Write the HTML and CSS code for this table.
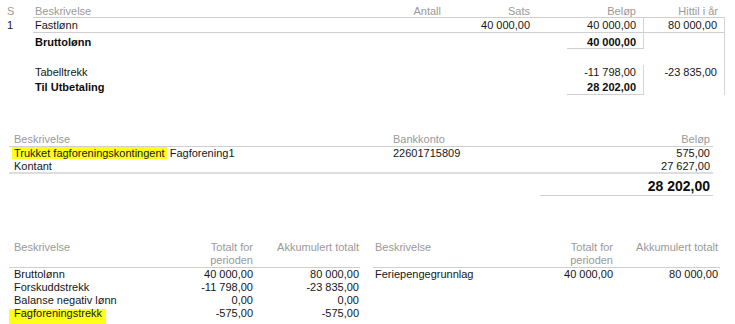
FILE: index.html
```html
<!DOCTYPE html>
<html lang="no">
<head>
<meta charset="utf-8">
<title>Lønnsslipp</title>
<link rel="stylesheet" href="styles.css">
</head>
<body>
<table class="lines">
  <colgroup>
    <col class="c-s"><col class="c-desc"><col class="c-ant"><col class="c-sats"><col class="c-gap"><col class="c-bel"><col class="c-hit">
  </colgroup>
  <tr class="hdr">
    <td class="s">S</td>
    <td class="b">Beskrivelse</td>
    <td class="b num">Antall</td>
    <td class="b num">Sats</td>
    <td class="b"></td>
    <td class="b num">Beløp</td>
    <td class="b num">Hittil i år</td>
  </tr>
  <tr class="r1">
    <td class="s">1</td>
    <td class="b">Fastlønn</td>
    <td class="b"></td>
    <td class="b num">40 000,00</td>
    <td class="b"></td>
    <td class="b num">40 000,00</td>
    <td class="b num vl vr">80 000,00</td>
  </tr>
  <tr class="r2">
    <td></td>
    <td class="bold">Bruttolønn</td>
    <td></td><td></td><td></td>
    <td class="num bold b">40 000,00</td>
    <td class="vl vr"></td>
  </tr>
  <tr class="r3">
    <td></td><td></td><td></td><td></td><td></td><td></td>
    <td class="vr"></td>
  </tr>
  <tr class="r4">
    <td></td>
    <td>Tabelltrekk</td>
    <td></td><td></td><td></td>
    <td class="num">-11 798,00</td>
    <td class="num vl vr">-23 835,00</td>
  </tr>
  <tr class="r5">
    <td></td>
    <td class="bold">Til Utbetaling</td>
    <td></td><td></td><td></td>
    <td class="num bold b">28 202,00</td>
    <td class="vl vr"></td>
  </tr>
</table>

<table class="pay">
  <colgroup><col class="p-desc"><col class="p-bank"><col class="p-bel"></colgroup>
  <tr class="phdr">
    <td class="b">Beskrivelse</td>
    <td class="b">Bankkonto</td>
    <td class="b num">Beløp</td>
  </tr>
  <tr class="pr1">
    <td><span class="hl">Trukket fagforeningskontingent</span> Fagforening1</td>
    <td>22601715809</td>
    <td class="num">575,00</td>
  </tr>
  <tr class="pr2">
    <td class="b2">Kontant</td>
    <td class="b2"></td>
    <td class="b2 num">27 627,00</td>
  </tr>
</table>
<div class="total-row">
  <div class="total">28 202,00</div>
</div>

<div class="sums">
  <table class="sum left">
    <colgroup><col class="s-desc"><col class="s-per"><col class="s-acc"></colgroup>
    <tr class="shdr">
      <td class="b">Beskrivelse</td>
      <td class="b num">Totalt for<br>perioden</td>
      <td class="b num">Akkumulert totalt</td>
    </tr>
    <tr><td>Bruttolønn</td><td class="num">40 000,00</td><td class="num">80 000,00</td></tr>
    <tr><td>Forskuddstrekk</td><td class="num">-11 798,00</td><td class="num">-23 835,00</td></tr>
    <tr><td>Balanse negativ lønn</td><td class="num">0,00</td><td class="num">0,00</td></tr>
    <tr><td><span class="hl2">Fagforeningstrekk</span></td><td class="num">-575,00</td><td class="num">-575,00</td></tr>
  </table>
  <table class="sum right">
    <colgroup><col class="s-desc2"><col class="s-per"><col class="s-acc"></colgroup>
    <tr class="shdr">
      <td class="b">Beskrivelse</td>
      <td class="b num">Totalt for<br>perioden</td>
      <td class="b num">Akkumulert totalt</td>
    </tr>
    <tr><td>Feriepengegrunnlag</td><td class="num">40 000,00</td><td class="num">80 000,00</td></tr>
  </table>
</div>
</body>
</html>
```

FILE: styles.css
```css
html, body {
  margin: 0;
  padding: 0;
  background: #ffffff;
}
body {
  font-family: "Liberation Sans", Arial, sans-serif;
  font-size: 11px;
  color: #161616;
  width: 735px;
  height: 324px;
  overflow: hidden;
}
table {
  border-collapse: separate;
  border-spacing: 0;
  table-layout: fixed;
}
td {
  padding: 0;
  white-space: nowrap;
  vertical-align: top;
  overflow: visible;
}
.num { text-align: right; }
.bold { font-weight: bold; color: #0d0d0d; }
.b { border-bottom: 1px solid #cfcfcf; }
.b2 { border-bottom: 2px solid #dddddd; }
.vl { border-left: 1px solid #d4d4d4; }
.vr { border-right: 1px solid #d4d4d4; }

/* top lines table */
.lines {
  width: 725px;
  margin-top: 5px;
}
.c-s { width: 33px; }
.c-desc { width: 367px; }
.c-ant { width: 48px; }
.c-sats { width: 89px; }
.c-gap { width: 30px; }
.c-bel { width: 76px; }
.c-hit { width: 82px; }
.lines td { line-height: 12px; }
.lines td:nth-child(2) { padding-left: 2px; }
.lines td.num { padding-right: 7px; }
.lines .s { padding-left: 7px; }
.hdr td { color: #999999; height: 12px; }
.r1 td { height: 14px; line-height: 14px; }
.r2 td { padding-top: 3px; height: 12px; }
.r3 td { height: 16px; }
.r4 td { height: 14px; line-height: 14px; }
.r5 td { padding-top: 2px; height: 13px; line-height: 13px; }

/* payment table */
.pay {
  width: 704px;
  margin-left: 9px;
  margin-top: 38px;
}
.p-desc { width: 380px; }
.p-bank { width: 200px; }
.p-bel { width: 124px; }
.pay td { line-height: 13px; }
.pay td:first-child { padding-left: 5px; }
.pay td:nth-child(2) { padding-left: 4px; }
.pay td.num { padding-right: 3px; }
.phdr td { color: #999999; height: 13px; }
.pr1 td { height: 13px; }
.pr2 td { height: 12px; line-height: 12px; }
.hl {
  background: #ffff1a;
  margin-left: -2px;
  padding: 0 2px 0 2px;
}

.total-row {
  width: 704px;
  margin-left: 9px;
  display: flex;
  justify-content: flex-end;
}
.total {
  width: 170px;
  padding-right: 3px;
  padding-top: 4px;
  text-align: right;
  font-size: 14px;
  font-weight: bold;
  line-height: 17px;
  border-bottom: 1px solid #cfcfcf;
  color: #0d0d0d;
}

/* summary tables */
.sums {
  display: flex;
  gap: 13px;
  margin-left: 9px;
  margin-top: 45px;
  align-items: flex-start;
}
.sum td { line-height: 13px; height: 13px; }
.sum .shdr td { color: #999999; height: 26px; }
.left { width: 351px; }
.s-desc { width: 181px; }
.s-per { width: 70px; }
.s-acc { width: 100px; }
.left td:first-child { padding-left: 5px; }
.left td:nth-child(2) { padding-right: 7px; }
.left td:nth-child(3) { padding-right: 1px; }
.right { width: 347px; }
.s-desc2 { width: 177px; }
.right td:first-child { padding-left: 2px; }
.right td:nth-child(2) { padding-right: 7px; }
.right td:nth-child(3) { padding-right: 2px; }
.hl2 {
  display: inline-block;
  margin-left: -5px;
  padding: 0 4px 4px 5px;
  background: linear-gradient(to bottom, transparent 2px, #ffff1a 2px);
}
```
